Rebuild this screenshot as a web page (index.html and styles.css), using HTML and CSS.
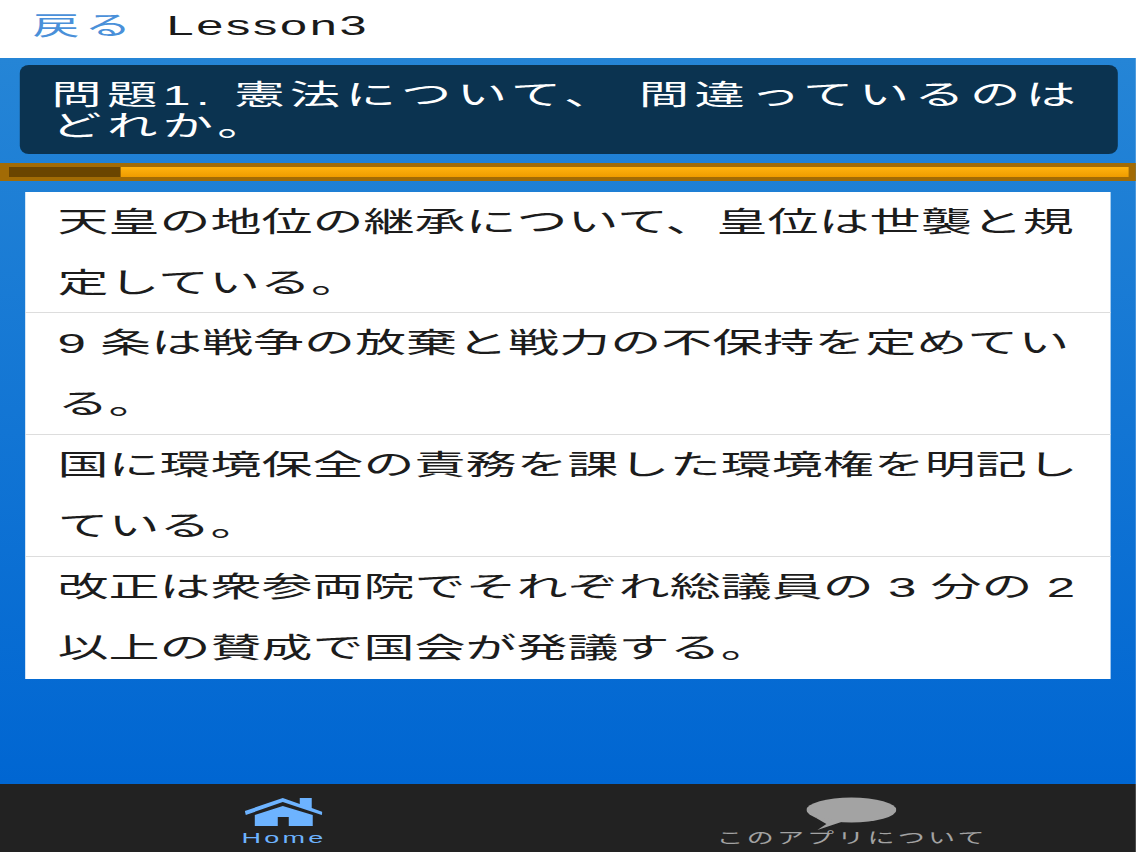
FILE: index.html
```html
<!DOCTYPE html>
<html lang="ja">
<head>
    <meta charset="UTF-8">
    <meta name="viewport" content="width=device-width, initial-scale=1.0">
    <title>Lesson3</title>
    <link rel="stylesheet" href="styles.css">
</head>
<body>
    <div class="app">
        <div class="cabecera">
            <span class="volver">戻る</span>
            <span class="leccion">Lesson3</span>
        </div>
        <div class="contenido">
            <div class="pregunta">問題1. 憲法について、 間違っているのはどれか。</div>
            <div class="barra">
                <div class="progreso"></div>
            </div>
            <div class="lista">
                <div class="opcion">天皇の地位の継承について、皇位は世襲と規定している。</div>
                <div class="opcion">9 条は戦争の放棄と戦力の不保持を定めている。</div>
                <div class="opcion">国に環境保全の責務を課した環境権を明記している。</div>
                <div class="opcion">改正は衆参両院でそれぞれ総議員の 3 分の 2 以上の賛成で国会が発議する。</div>
            </div>
        </div>
        <div class="pie">
            <div class="pestana activa">
                <svg class="icono" viewBox="0 0 78 29" preserveAspectRatio="none">
                    <path d="M0 14 L38 1 L55 7 V1 H67 V11 L78 15 L77 18 L38 5 L1 18 Z" fill="#6db3ff"/>
                    <path d="M10 18 L38 9 L68 18 V29 H44 V20 H33 V29 H10 Z" fill="#6db3ff"/>
                </svg>
                <span class="etiqueta">Home</span>
            </div>
            <div class="pestana">
                <svg class="icono" viewBox="0 0 90 33" preserveAspectRatio="none">
                    <ellipse cx="45" cy="13" rx="45" ry="12.5" fill="#a3a3a3"/>
                    <path d="M8 20 L20 27 L11 33 L38 24 Z" fill="#a3a3a3"/>
                </svg>
                <span class="etiqueta">このアプリについて</span>
            </div>
        </div>
    </div>
</body>
</html>
```
FILE: styles.css
```css
html, body {
    margin: 0;
    height: 100%;
    overflow: hidden;
}

/* la captura original esta estirada a lo ancho */
.app {
    width: 631.2px;
    height: 852px;
    display: flex;
    flex-direction: column;
    transform: scaleX(1.8);
    transform-origin: 0 0;
    font-family: "Liberation Sans", "Noto Sans CJK JP", sans-serif;
}

.cabecera {
    height: 58px;
    flex-shrink: 0;
    display: flex;
    align-items: center;
    gap: 16.5px;
    padding: 0 0 6px 18px;
    box-sizing: border-box;
    background-color: #fff;
}

.volver {
    font-size: 26px;
    letter-spacing: 3px;
    margin-bottom: 6px;
    color: #4a90d9;
}

.leccion {
    font-size: 27px;
    letter-spacing: 1.5px;
    color: #1a1a1a;
}

.contenido {
    flex: 1;
    display: flex;
    flex-direction: column;
    background: linear-gradient(to bottom, #2585d6, #0066d2);
}

.pregunta {
    margin: 7px 10.7px 0 10.5px;
    height: 89px;
    box-sizing: border-box;
    padding: 15px 10px 0 18px;
    font-size: 28px;
    letter-spacing: 2.9px;
    line-height: 31px;
    color: #fff;
    background-color: #0b3350;
    border-radius: 5px / 8px;
}

.barra {
    margin-top: 9px;
    height: 18px;
    box-sizing: border-box;
    padding: 4px 4.5px;
    background-color: #a26b05;
}

.progreso {
    height: 10px;
    background: linear-gradient(to bottom, #ffb30f, #ef9c00);
    box-shadow: inset 62px 0 0 #6b4500;
}

.lista {
    margin: 11px 13.9px 0;
    background-color: #fff;
}

.opcion {
    padding: 0 4px 0 18px;
    height: 122px;
    box-sizing: border-box;
    font-size: 28.35px;
    line-height: 61px;
    color: #1c1c1c;
    border-bottom: 1px solid #ddd;
}

.opcion:first-child {
    height: 121px;
}

.opcion:last-child {
    border-bottom: none;
}

.pie {
    height: 68px;
    flex-shrink: 0;
    display: flex;
    background-color: #222;
}

.pestana {
    flex: 1;
    display: flex;
    flex-direction: column;
    align-items: center;
    padding-top: 13px;
    color: #a3a3a3;
}

.pestana.activa {
    color: #6db3ff;
}

.icono {
    display: block;
    height: 33px;
    width: 50px;
}

.activa .icono {
    width: 43.3px;
    height: 29px;
}

.etiqueta {
    font-size: 15px;
    line-height: 16px;
    margin-top: 4px;
    letter-spacing: 1.8px;
    white-space: nowrap;
}

.pestana:not(.activa) .etiqueta {
    margin-top: 0;
}
```
